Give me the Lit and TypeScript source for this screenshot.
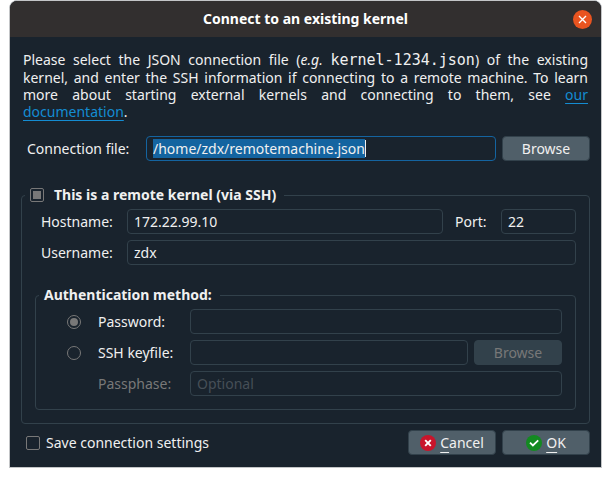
import { LitElement, html, css } from "lit";
import { customElement, property, query } from "lit/decorators.js";

@customElement("app-root")
export class AppRoot extends LitElement {
  @property() path = "/home/zdx/remotemachine.json";

  @query("#connection-file") private fileInput!: HTMLInputElement;

  static styles = css`
    :host {
      display: block;
      padding: 0 9px;
      min-height: 100vh;
      box-sizing: border-box;
      background: #ffffff;
      color: #f0f0f0;
      font: 14px/18px "Noto Sans", "Open Sans", sans-serif;
    }
    * {
      box-sizing: border-box;
    }
    .dialog {
      border: 1px solid #c3c5c7;
      border-radius: 8px 8px 0 0;
      background: #19232d;
      overflow: hidden;
    }
    .titlebar {
      display: grid;
      grid-template-columns: 1fr auto 1fr;
      align-items: center;
      height: 36px;
      padding: 0 9px;
      background: #322f2f;
      color: #ffffff;
    }
    .title {
      grid-column: 2;
      margin: 0;
      font-size: 14px;
      font-weight: 700;
      line-height: 20px;
    }
    .close {
      justify-self: end;
      width: 19px;
      height: 19px;
      padding: 0;
      border: 0;
      border-radius: 50%;
      background: #e95420;
    }
    .close svg,
    .button svg {
      display: block;
    }
    .body {
      padding: 14px 11px 12px;
    }
    .intro {
      margin: 0 2px 16px;
      text-align: justify;
      line-height: 17px;
    }
    .line {
      display: block;
      text-align-last: justify;
      white-space: nowrap;
    }
    .line.last {
      text-align-last: left;
    }
    code {
      font: 15px/17px "DejaVu Sans Mono", monospace;
    }
    a {
      color: #148cd2;
      text-decoration: underline;
      text-underline-offset: 3px;
    }
    .row {
      display: flex;
      align-items: center;
      gap: 6px;
    }
    .row label {
      flex: none;
    }
    .text {
      flex: 1;
      min-width: 0;
      width: 100%;
      height: 25px;
      padding: 0 6px;
      border: 1px solid #32414b;
      border-radius: 4px;
      outline: 0;
      background: #19232d;
      color: #f0f0f0;
      font: inherit;
    }
    .text::selection {
      background: #1464a0;
      color: #f0f0f0;
    }
    .text::placeholder {
      color: #464f57;
      opacity: 1;
    }
    .text:focus {
      border-color: #1464a0;
    }
    .text.caret {
      background: linear-gradient(#f0f0f0, #f0f0f0) var(--caret) 3px / 1px 17px
        no-repeat #19232d;
    }
    .button {
      display: flex;
      flex: none;
      align-items: center;
      justify-content: center;
      gap: 4px;
      width: 88px;
      height: 25px;
      padding: 0;
      border: 1px solid #32414b;
      border-radius: 4px;
      background: #505f69;
      color: #f0f0f0;
      font: inherit;
    }
    .button:disabled {
      background: #32414b;
      color: #787878;
    }
    .mnemonic {
      text-decoration: underline;
      text-underline-offset: 4px;
    }
    .file-label {
      width: 113px;
      margin-left: 6px;
    }
    fieldset {
      min-width: 0;
      margin: 0;
      padding: 0 13px 13px;
      border: 1px solid #32414b;
      border-radius: 4px;
    }
    legend {
      display: flex;
      align-items: center;
      height: 20px;
      margin-left: -10px;
      padding: 0 8px 0 5px;
      font-weight: 700;
    }
    .remote {
      margin-top: 24px;
    }
    .remote > legend {
      gap: 10px;
    }
    .fields {
      display: grid;
      gap: 6px;
      padding-top: 4px;
    }
    .host-label {
      width: 80px;
      margin-left: 6px;
    }
    .port-label {
      width: 34px;
      margin: 0 6px;
    }
    .text.port {
      flex: none;
      width: 75px;
    }
    .auth {
      margin-top: 20px;
    }
    .auth-label {
      width: 86px;
    }
    .indent {
      margin-left: 49px;
    }
    .dim {
      color: #787878;
    }
    .tick,
    .radio {
      appearance: none;
      display: grid;
      flex: none;
      place-items: center;
      width: 14px;
      height: 14px;
      margin: 0;
      border: 1px solid #787878;
    }
    .tick {
      border-radius: 2px;
    }
    .radio {
      margin: 0 11px 0 18px;
      border-radius: 50%;
    }
    .tick:checked::before,
    .radio:checked::before {
      content: "";
      width: 8px;
      height: 8px;
      background: #787878;
    }
    .radio:checked::before {
      border-radius: 50%;
    }
    .footer {
      margin-top: 6px;
      padding-left: 5px;
    }
    .footer label {
      flex: 1;
    }
  `;

  firstUpdated() {
    const input = this.fileInput;
    const context = document.createElement("canvas").getContext("2d");
    if (context) {
      context.font = getComputedStyle(input).font;
      const width = Math.round(context.measureText(this.path).width);
      input.style.setProperty("--caret", `${width + 6}px`);
    }
    input.focus();
    input.select();
  }

  render() {
    return html`
      <main class="dialog" role="dialog" aria-labelledby="title">
        <header class="titlebar">
          <h1 class="title" id="title">Connect to an existing kernel</h1>
          <button class="close" aria-label="Close">
            <svg width="19" height="19" viewBox="0 0 19 19">
              <path d="M6 6l7 7M13 6l-7 7" stroke="#fff" stroke-width="1.4" />
            </svg>
          </button>
        </header>
        <form class="body" @submit=${(e: Event) => e.preventDefault()}>
          <p class="intro">
            <span class="line"
              >Please select the JSON connection file (<em>e.g.</em>
              <code>kernel-1234.json</code>) of the existing</span
            >
            <span class="line"
              >kernel, and enter the SSH information if connecting to a remote
              machine. To learn</span
            >
            <span class="line"
              >more about starting external kernels and connecting to them, see
              <a href="#documentation">our</a></span
            >
            <span class="line last"
              ><a href="#documentation">documentation</a>.</span
            >
          </p>
          <div class="row">
            <label class="file-label" for="connection-file"
              >Connection file:</label
            >
            <input
              class="text caret"
              id="connection-file"
              spellcheck="false"
              .value=${this.path}
            />
            <button class="button" type="button">Browse</button>
          </div>

          <fieldset class="remote">
            <legend>
              <input class="tick" type="checkbox" id="remote" checked />
              <label for="remote">This is a remote kernel (via SSH)</label>
            </legend>
            <div class="fields">
              <div class="row">
                <label class="host-label" for="host">Hostname:</label>
                <input class="text" id="host" value="172.22.99.10" />
                <label class="port-label" for="port">Port:</label>
                <input class="text port" id="port" value="22" />
              </div>
              <div class="row">
                <label class="host-label" for="user">Username:</label>
                <input class="text" id="user" value="zdx" />
              </div>
            </div>

            <fieldset class="auth">
              <legend>Authentication method:</legend>
              <div class="fields">
                <div class="row">
                  <input
                    class="radio"
                    type="radio"
                    name="method"
                    id="by-password"
                    checked
                  />
                  <label class="auth-label" for="by-password">Password:</label>
                  <input
                    class="text"
                    type="password"
                    aria-label="Password"
                  />
                </div>
                <div class="row">
                  <input
                    class="radio"
                    type="radio"
                    name="method"
                    id="by-keyfile"
                  />
                  <label class="auth-label" for="by-keyfile"
                    >SSH keyfile:</label
                  >
                  <input class="text" aria-label="SSH keyfile" disabled />
                  <button class="button" type="button" disabled>Browse</button>
                </div>
                <div class="row">
                  <label class="auth-label indent dim" for="passphrase"
                    >Passphase:</label
                  >
                  <input
                    class="text"
                    type="password"
                    id="passphrase"
                    placeholder="Optional"
                    disabled
                  />
                </div>
              </div>
            </fieldset>
          </fieldset>

          <div class="row footer">
            <input class="tick" type="checkbox" id="save" />
            <label for="save">Save connection settings</label>
            <button class="button" type="button">
              <svg width="16" height="16" viewBox="0 0 16 16">
                <circle cx="8" cy="8" r="8" fill="#c9152b" />
                <path
                  d="M5.2 5.2l5.6 5.6M10.8 5.2l-5.6 5.6"
                  stroke="#fff"
                  stroke-width="1.9"
                />
              </svg>
              <span><span class="mnemonic">C</span>ancel</span>
            </button>
            <button class="button" type="submit">
              <svg width="16" height="16" viewBox="0 0 16 16">
                <circle cx="8" cy="8" r="8" fill="#138a21" />
                <path
                  d="M4 7.6l2.9 2.8L12.2 5.4"
                  fill="none"
                  stroke="#fff"
                  stroke-width="1.8"
                />
              </svg>
              <span><span class="mnemonic">O</span>K</span>
            </button>
          </div>
        </form>
      </main>
    `;
  }
}
